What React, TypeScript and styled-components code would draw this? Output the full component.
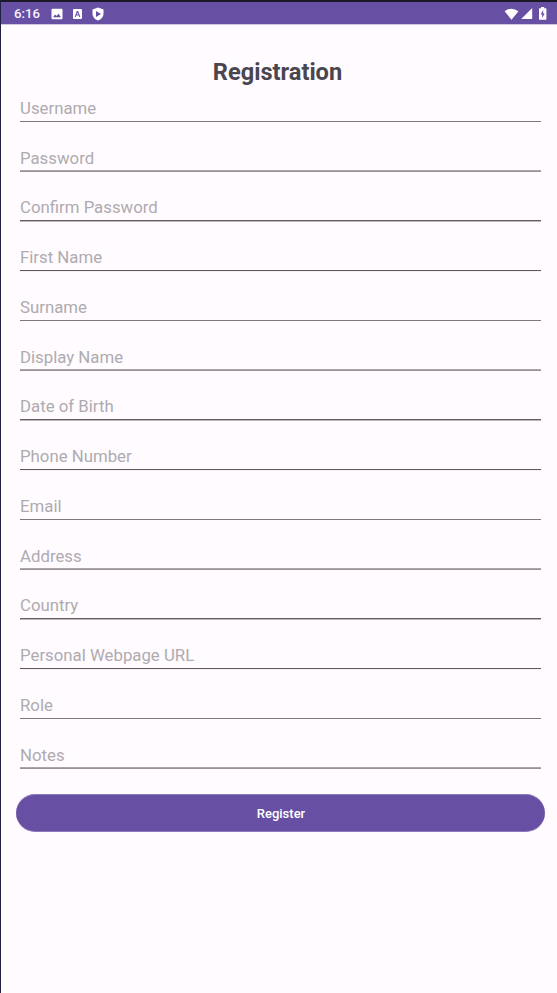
import React from "react";
import styled, { createGlobalStyle } from "styled-components";

const GlobalStyle = createGlobalStyle`
  * { box-sizing: border-box; }
  body { margin: 0; background: #fffbff; font-family: Roboto, sans-serif; }
`;
const Screen = styled.div`
  display: flex;
  flex-direction: column;
  height: 993px;
  background: #fffbff;
  border-left: 1px solid #211f42;
`;
const StatusBar = styled.header`
  display: flex;
  align-items: center;
  height: 25px;
  padding: 2px 8px 0 13px;
  border-top: 2px solid #1b1a24;
  border-bottom: 1px solid #d0c7e2;
  background: #6750a3;
  color: #fff;
`;
const Clock = styled.span`
  width: 37px;
  font-size: 13.2px;
  line-height: 18px;
  font-weight: 500;
  color: #f6f2fa;
`;
const Notifications = styled.div`
  display: flex;
  align-items: center;
  gap: 9px;
  flex: 1;
`;
const Indicators = styled.div`
  display: flex;
  align-items: center;
  gap: 2px;
`;
const Icon = styled.svg<{ $w: number; $h: number }>`
  display: block;
  width: ${(p) => p.$w}px;
  height: ${(p) => p.$h}px;
  fill: #fff;
`;
const Content = styled.main`
  display: flex;
  flex-direction: column;
  padding: 32px 12px 0 15px;
`;
const Title = styled.h1`
  margin: 0;
  padding-right: 6px;
  height: 30px;
  line-height: 30px;
  font-size: 23.6px;
  font-weight: 700;
  text-align: center;
  color: #49464f;
`;
const Form = styled.form`
  display: flex;
  flex-direction: column;
`;
const Input = styled.input<{ $height: number; $line: [string, string] }>`
  display: block;
  height: ${(p) => p.$height}px;
  margin: 0 4px;
  padding: 9px 0 ${(p) => p.$height - 32}px;
  border: 0;
  outline: 0;
  background: linear-gradient(${(p) => p.$line[0]} 50%, ${(p) => p.$line[1]} 50%) left bottom 14px / 100% 2px no-repeat;
  font: 400 16.8px/23px Roboto, sans-serif;
  color: #49464f;
  &::placeholder { color: #aeabb0; opacity: 1; }
`;
const Submit = styled.button`
  height: 38px;
  margin-top: 11px;
  padding: 1px 0 0 1px;
  border: solid #8c7bba;
  border-width: 1px 0;
  border-radius: 19px;
  background: #6750a3;
  color: #fff;
  font: 500 13px Roboto, sans-serif;
`;

const fields = ["Username", "Password", "Confirm Password", "First Name", "Surname", "Display Name", "Date of Birth", "Phone Number", "Email", "Address", "Country", "Personal Webpage URL", "Role", "Notes"];

// Underlines fall on fractional pixels, repeating every four fields.
const rhythm: { height: number; line: [string, string] }[] = [
  { height: 50, line: ["#7c7880", "#fffbff"] },
  { height: 49, line: ["#aaa6ac", "#969299"] },
  { height: 50, line: ["#625e67", "#bbb7bd"] },
  { height: 50, line: ["#5c5861", "#f4f0f4"] },
];

export default function App() {
  return (
    <Screen>
      <GlobalStyle />
      <StatusBar>
        <Clock>6:16</Clock>
        <Notifications>
          <Icon $w={12} $h={12} viewBox="0 0 12 12"><path fillRule="evenodd" d="M1.500.7h9q1 0 1 1v8.600q0 1-1 1h-9q-1 0-1-1V1.700q0-1 1-1zM2 9.300h8L7.500 5.800 5.500 8 4 6.500z" /></Icon>
          <Icon $w={11} $h={12} viewBox="0 0 11 12"><path fillRule="evenodd" d="M2 1h7q1 0 1 1v8q0 1-1 1H2q-1 0-1-1V2q0-1 1-1zM4.800 3L2.700 9h1.100l.5-1.400h2.400L7.200 9h1.100L6.200 3zM5.500 4.400l.8 2.200H4.700z" /></Icon>
          <Icon $w={12} $h={14} viewBox="0 0 12 14"><path fillRule="evenodd" d="M6 .5l5.500 2V7c0 3-2.300 5.300-5.500 6.500C2.800 12.300.5 10 .5 7V2.500zM4 4v6l5-3z" /></Icon>
        </Notifications>
        <Indicators>
          <Icon $w={15} $h={12} viewBox="0 0 15 12"><path d="M.6 3.200Q7.500-1.800 14.400 3.200L7.500 11.700z" /></Icon>
          <Icon $w={12} $h={12} viewBox="0 0 12 12"><path d="M11.200 0v11H.2z" /></Icon>
          <Icon $w={14} $h={14} viewBox="0 0 14 14"><path fillRule="evenodd" d="M6 0h3.200V1.300h1.600q.6 0 .6.600v10.200q0 .6-.6.600H4.600q-.6 0-.6-.6V1.900q0-.6.6-.6H6zM8.200 3L5.700 7.500h1.500V11L9.700 6.500H8.200z" /></Icon>
        </Indicators>
      </StatusBar>
      <Content>
        <Title>Registration</Title>
        <Form>
          {fields.map((name, i) => (
            <Input key={name} placeholder={name} aria-label={name} $height={rhythm[i % 4].height} $line={rhythm[i % 4].line} />
          ))}
          <Submit type="button">Register</Submit>
        </Form>
      </Content>
    </Screen>
  );
}
